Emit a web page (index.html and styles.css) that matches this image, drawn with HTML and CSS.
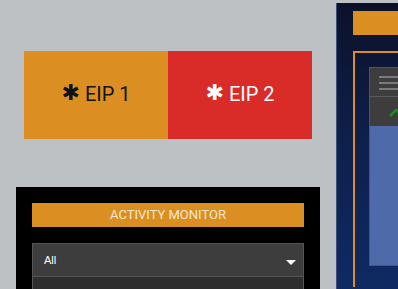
FILE: index.html
```html
<!DOCTYPE html>
<html lang="en">
<head>
    <meta charset="UTF-8">
    <meta name="viewport" content="width=device-width, initial-scale=1.0">
    <title>EIP Console</title>
    <link rel="stylesheet" href="styles.css">
</head>
<body>
    <div class="main">
        <div class="eip-row">
            <button class="eip eip-1"><span class="star">✱</span>EIP 1</button>
            <button class="eip eip-2"><span class="star">✱</span>EIP 2</button>
        </div>

        <div class="monitor">
            <div class="monitor-title">ACTIVITY MONITOR</div>
            <div class="select">
                <span>All</span>
                <span class="caret"></span>
            </div>
            <div class="select-list"></div>
        </div>
    </div>

    <div class="side">
        <div class="side-bar"></div>
        <div class="side-frame">
            <div class="widget">
                <div class="widget-head">
                    <span class="line"></span>
                    <span class="line"></span>
                    <span class="line"></span>
                </div>
                <div class="widget-row">
                    <svg width="14" height="10" viewBox="0 0 14 10">
                        <polyline points="1,8 7,2 13,8" fill="none" stroke="#1f8a1f" stroke-width="2.5"/>
                    </svg>
                </div>
                <div class="widget-body"></div>
            </div>
        </div>
    </div>
</body>
</html>
```

FILE: styles.css
```css
body {
    margin: 0;
    height: 289px;
    overflow: hidden;
    background: #bdc1c4;
    display: flex;
    font-family: "Liberation Sans", Arial, sans-serif;
}
.main {
    width: 336px;
    flex-shrink: 0;
    padding-top: 51px;
}
.eip-row {
    display: flex;
    margin-left: 24px;
    width: 288px;
}
.eip {
    flex: 1;
    height: 88px;
    border: none;
    font-family: Roboto, sans-serif;
    font-size: 20px;
    padding: 0 0 2px 0;
    display: flex;
    align-items: center;
    justify-content: center;
}
.eip .star {
    font-family: "DejaVu Sans", sans-serif;
    font-size: 22px;
    font-weight: bold;
    margin-right: 5px;
    margin-top: -3px;
}
.eip-1 {
    background: #db8f22;
    color: #111;
}
.eip-2 {
    background: #d92b27;
    color: #fff;
}
.monitor {
    margin: 48px 0 0 16px;
    width: 272px;
    height: 86px;
    background: #000;
    padding: 16px 16px 0;
}
.monitor-title {
    height: 24px;
    line-height: 24px;
    background: #db8f22;
    color: #f8e8d0;
    text-align: center;
    font-family: Roboto, sans-serif;
    font-size: 13px;
}
.select {
    margin-top: 16px;
    height: 32px;
    border: 1px solid #555;
    background: #3d3d3d;
    display: flex;
    align-items: center;
    justify-content: space-between;
    padding: 0 7px 0 11px;
    color: #fff;
    font-size: 11px;
}
.caret {
    width: 0;
    height: 0;
    border-left: 5px solid transparent;
    border-right: 5px solid transparent;
    border-top: 5px solid #fff;
    margin-top: 4px;
}
.select-list {
    height: 12px;
    border-left: 1px solid #555;
    border-right: 1px solid #555;
    background: #2e2e2e;
}
.side {
    flex: 1;
    margin-top: 3px;
    padding: 8px 0 0 16px;
    background: linear-gradient(180deg, #0b1128 0%, #0e1f4a 45%, #0f2a63 100%);
    border-left: 1px solid #3d4f78;
    min-width: 0;
}
.side-bar {
    height: 24px;
    background: #db8f22;
}
.side-frame {
    margin-top: 16px;
    border-top: 2px solid #db8f22;
    border-left: 2px solid #db8f22;
    padding: 14px 0 0 14px;
    height: 220px;
}
.widget {
    border: 1px solid #555;
    border-right: none;
    background: #3d3d3d;
}
.widget-head {
    height: 29px;
    border-bottom: 1px solid #5a5a5a;
    display: flex;
    flex-direction: column;
    gap: 4px;
    padding: 8px 0 0 9px;
    box-sizing: border-box;
}
.line {
    display: block;
    height: 2px;
    background: #7a7a7a;
}
.widget-row {
    height: 29px;
    padding: 7px 0 0 19px;
    box-sizing: border-box;
}
.widget-body {
    height: 139px;
    background: #4f6aa8;
}
```
